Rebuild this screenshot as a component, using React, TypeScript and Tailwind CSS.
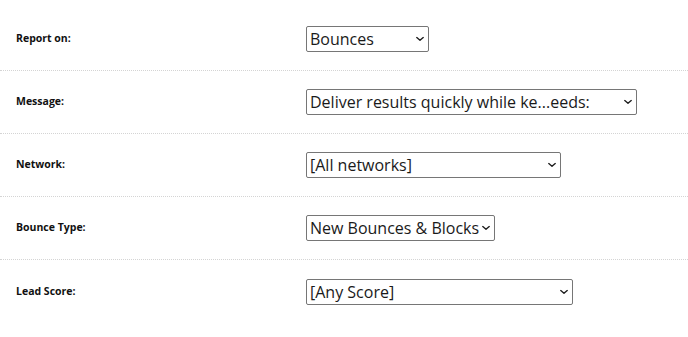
import { useState } from "react";

type Row = {
  id: string;
  label: string;
  value: string;
  options: string[];
  width: string;
};

const rows: Row[] = [
  { id: "report", label: "Report on:", value: "Bounces", options: ["Bounces", "Opens", "Clicks"], width: "w-[123px]" },
  {
    id: "message",
    label: "Message:",
    value: "Deliver results quickly while ke...eeds:",
    options: ["Deliver results quickly while ke...eeds:"],
    width: "w-[331px]",
  },
  { id: "network", label: "Network:", value: "[All networks]", options: ["[All networks]"], width: "w-[255px]" },
  {
    id: "bounce",
    label: "Bounce Type:",
    value: "New Bounces & Blocks",
    options: ["New Bounces & Blocks", "All Bounces"],
    width: "w-[189px]",
  },
  { id: "score", label: "Lead Score:", value: "[Any Score]", options: ["[Any Score]"], width: "w-[267px]" },
];

function Chevron() {
  return (
    <svg viewBox="0 0 10 6" className="w-[8px] h-[5px]" fill="none">
      <path d="M1 1l4 3.6L9 1" stroke="#1f1f1f" strokeWidth="1.7" strokeLinecap="round" strokeLinejoin="round" />
    </svg>
  );
}

export default function App() {
  const [values, setValues] = useState<Record<string, string>>(
    Object.fromEntries(rows.map((r) => [r.id, r.value]))
  );

  return (
    <div className="w-[688px] h-[337px] bg-white pt-[8px] px-4 font-['Open_Sans',sans-serif] text-[#222]">
      {rows.map((row, i) => (
        <div
          key={row.id}
          className={`flex items-center h-[63px] -mx-4 px-4 ${
            i < rows.length - 1 ? "border-b border-dotted border-[#d4d4d4]" : ""
          }`}
        >
          <div className="w-[290px] shrink-0 text-[10.5px] font-bold text-[#111]">{row.label}</div>
          <div className={`relative ${row.width}`}>
            <select
              value={values[row.id]}
              onChange={(e) => setValues({ ...values, [row.id]: e.target.value })}
              className="appearance-none w-full h-[26px] pl-[3px] pr-[14px] border border-[#767676] rounded-[2px] bg-white text-[16px] leading-[24px] text-[#1a1a1a] font-['Open_Sans',sans-serif] truncate"
            >
              {row.options.map((o) => (
                <option key={o}>{o}</option>
              ))}
            </select>
            <span className="pointer-events-none absolute right-[5px] top-1/2 -translate-y-1/2 flex">
              <Chevron />
            </span>
          </div>
        </div>
      ))}
    </div>
  );
}
